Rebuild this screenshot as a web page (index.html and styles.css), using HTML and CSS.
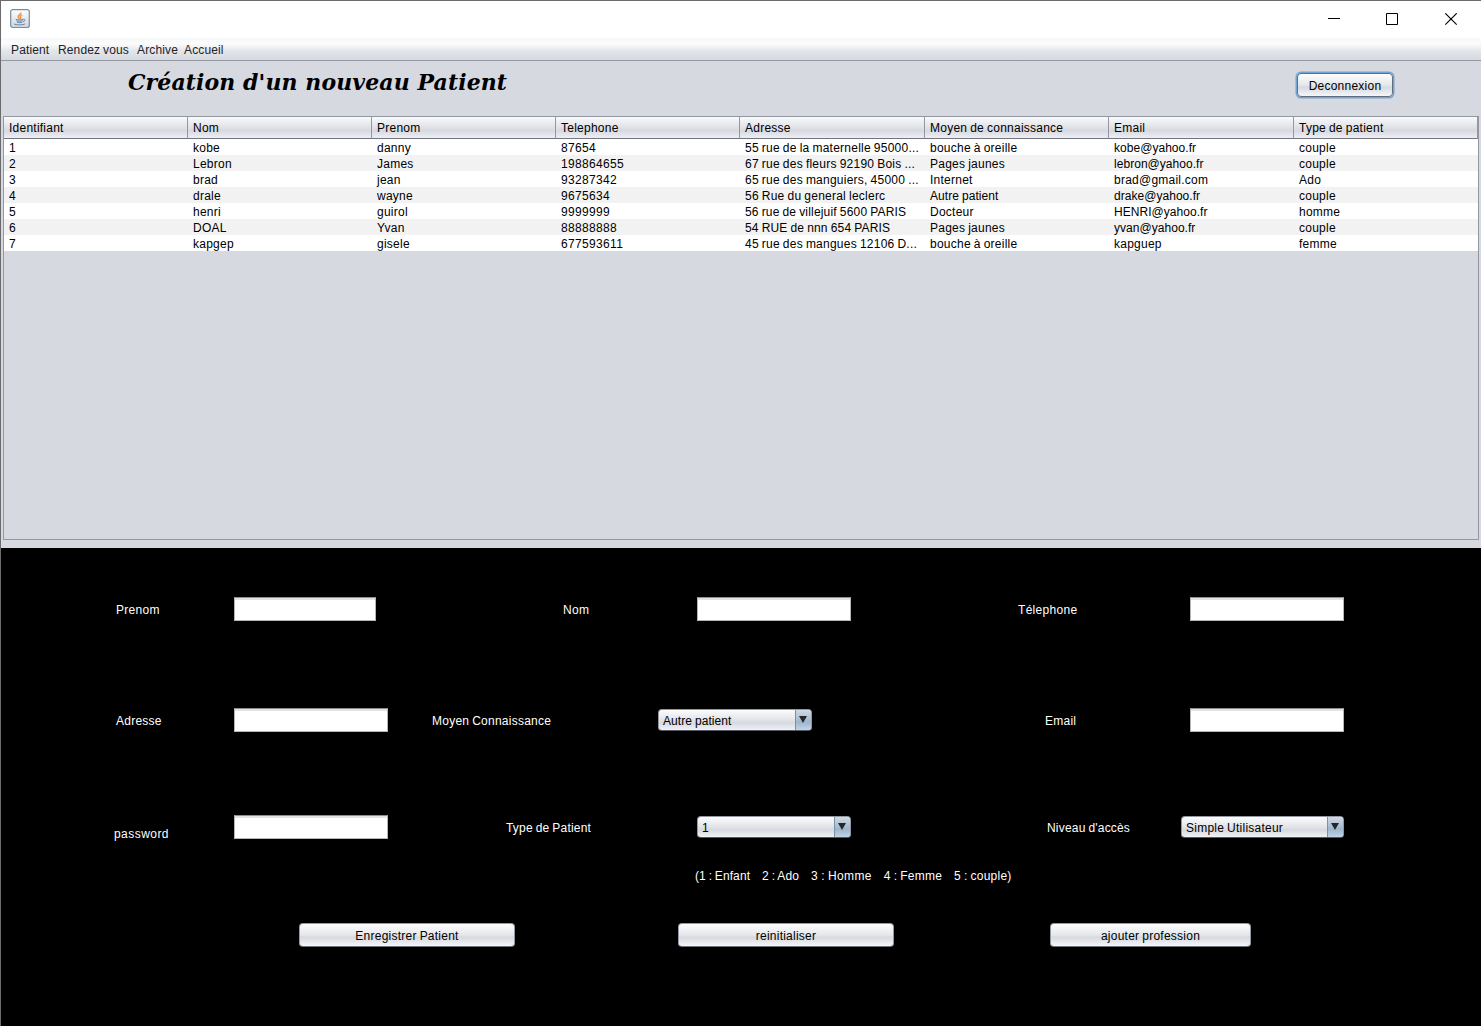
FILE: index.html
```html
<!DOCTYPE html>
<html lang="fr">
<head>
<meta charset="utf-8">
<title>Création d'un nouveau Patient</title>
<link rel="stylesheet" href="styles.css">
</head>
<body>
<div class="window">
  <header class="titlebar">
    <svg class="app-icon" width="20" height="20" viewBox="0 0 20 20">
      <defs><linearGradient id="tile" x2="0" y2="1"><stop offset="0" stop-color="#fff"/><stop offset="1" stop-color="#cdd6de"/></linearGradient></defs>
      <rect x=".7" y=".7" width="18.6" height="17.8" rx="2" fill="url(#tile)" stroke="#7b8c9b" stroke-width="1.2"/>
      <path d="M10.8 3.4c.7 1.8-3 2.6-2.5 4.6.2.8.9 1.2 1 2M12 6.2c-1.6.8-2.2 1.4-1.4 2.4.4.5.2 1-.3 1.4" fill="none" stroke="#ee9148" stroke-width="1.4"/>
      <path d="M5.700 10.300c1 .8 6.300.8 7.500 0M6.300 11.700c1 .7 5 .7 6.500 0M7 13.200c1 .6 4.200.6 5.300 0M13.300 10.200c2.300-.5 2.300 2-.3 2.500M4 14.800c1.500 1.400 9.500 1.400 11 0" fill="none" stroke="#6486a0" stroke-width="1"/>
    </svg>
    <svg class="controls" width="130" height="14" viewBox="0 0 130 14" fill="none" stroke="#000">
      <path d="M0 5.500H12"/>
      <path d="M58.500.500H69.500V11.500H58.500Z"/>
      <path d="M117.300.300L128.700 11.700M128.700.300L117.300 11.700" stroke-width="1.100"/>
    </svg>
  </header>
  <nav class="menubar">
    <span>Patient</span><span>Rendez vous</span><span>Archive</span><span>Accueil</span>
  </nav>
  <section class="list-panel">
    <div class="heading">
      <h1>Création d'un nouveau Patient</h1>
      <button class="button focused">Deconnexion</button>
    </div>
    <div class="table-frame">
      <table>
        <colgroup><col class="c184"><col class="c184"><col class="c184"><col class="c184"><col class="c185"><col class="c184"><col class="c185"><col class="c184"></colgroup>
        <thead><tr><th>Identifiant</th><th>Nom</th><th>Prenom</th><th>Telephone</th><th>Adresse</th><th>Moyen de connaissance</th><th>Email</th><th>Type de patient</th></tr></thead>
        <tbody>
          <tr><td>1</td><td>kobe</td><td>danny</td><td class="num">87654</td><td>55 rue de la maternelle 95000...</td><td>bouche à oreille</td><td class="mail">kobe@yahoo.fr</td><td>couple</td></tr>
          <tr><td>2</td><td>Lebron</td><td>James</td><td class="num">198864655</td><td>67 rue des fleurs 92190 Bois ...</td><td>Pages jaunes</td><td class="mail">lebron@yahoo.fr</td><td>couple</td></tr>
          <tr><td>3</td><td>brad</td><td>jean</td><td class="num">93287342</td><td>65 rue des manguiers, 45000 ...</td><td>Internet</td><td>brad@gmail.com</td><td>Ado</td></tr>
          <tr><td>4</td><td>drale</td><td>wayne</td><td class="num">9675634</td><td>56 Rue du general leclerc</td><td class="tight">Autre patient</td><td class="mail">drake@yahoo.fr</td><td>couple</td></tr>
          <tr><td>5</td><td>henri</td><td>guirol</td><td class="num">9999999</td><td class="snug">56 rue de villejuif 5600 PARIS</td><td>Docteur</td><td class="mail">HENRI@yahoo.fr</td><td>homme</td></tr>
          <tr><td>6</td><td>DOAL</td><td>Yvan</td><td class="num">88888888</td><td class="snug">54 RUE de nnn 654 PARIS</td><td>Pages jaunes</td><td class="mail">yvan@yahoo.fr</td><td>couple</td></tr>
          <tr><td>7</td><td>kapgep</td><td>gisele</td><td class="num">677593611</td><td>45 rue des mangues 12106 D...</td><td>bouche à oreille</td><td>kapguep</td><td>femme</td></tr>
        </tbody>
      </table>
    </div>
  </section>
  <form class="form">
    <div class="row identity">
      <label>Prenom</label><input class="short" aria-label="Prenom">
      <label>Nom</label><input aria-label="Nom">
      <label>Télephone</label><input aria-label="Télephone">
    </div>
    <div class="row contact">
      <label>Adresse</label><input aria-label="Adresse">
      <label>Moyen Connaissance</label><div class="combo"><span class="tight">Autre patient</span><i></i></div>
      <label>Email</label><input aria-label="Email">
    </div>
    <div class="row access">
      <label class="low">password</label><input aria-label="password">
      <label class="snug">Type de Patient</label><div class="combo"><span>1</span><i></i></div>
      <label class="snug">Niveau d'accès</label><div class="combo wide"><span>Simple Utilisateur</span><i></i></div>
    </div>
    <p class="hint"><span>(1 : Enfant</span><span>2 : Ado</span><span>3 : Homme</span><span>4 : Femme</span><span>5 : couple)</span></p>
    <div class="actions">
      <button type="button" class="button">Enregistrer Patient</button>
      <button type="button" class="button">reinitialiser</button>
      <button type="button" class="button">ajouter profession</button>
    </div>
  </form>
</div>
</body>
</html>
```

FILE: styles.css
```css
* { box-sizing: border-box; }
body { margin: 0; overflow: hidden; }
.window {
  height: 1026px;
  border-left: 1px solid #6b6a6c;
  border-top: 1px solid #6b6a6c;
  background: #d6d9e0;
  color: #000;
  font: 12px/16px "Liberation Sans", Arial, sans-serif;
  letter-spacing: .24px;
  word-spacing: -.6px;
  display: flex;
  flex-direction: column;
  white-space: nowrap;
}
.titlebar {
  height: 37px;
  background: #fff;
  display: flex;
  justify-content: space-between;
  padding: 8px 23px 0 9px;
}
.controls { margin-top: 4px; }
.menubar {
  height: 23px;
  border-bottom: 1px solid #9297a1;
  background: linear-gradient(#f7f8fa 0, #fbfbfc 6px, #e2e5ea 13px, #d6d9df);
  display: grid;
  grid-template-columns: 47px 79px 47px 60px;
  padding: 4px 0 0 10px;
  color: #232329;
  letter-spacing: .14px;
}
.list-panel { height: 487px; padding: 0 2px 8px; }
.heading { height: 55px; display: flex; justify-content: space-between; padding: 11px 86px 0 125px; }
h1 {
  margin: -3px 0 0;
  font: italic bold 22px/26px "DejaVu Serif", serif;
  letter-spacing: .1px;
  word-spacing: 0;
}
.button {
  height: 24px;
  padding: 2px 0 0;
  border: 1px solid #9599a3;
  border-bottom-color: #6e727b;
  border-radius: 4px;
  background: linear-gradient(#fdfdfe, #e5e7eb 50%, #d6d9df 60%, #f4f6fa);
  color: #000;
  font: inherit;
  letter-spacing: inherit;
  word-spacing: inherit;
}
.focused { width: 96px; border-color: #5f6f80; box-shadow: 0 0 0 1.500px #73a4d1; margin-top: 1px; }
.table-frame { height: 424px; border: 1px solid #9297a1; }
table { width: 1474px; table-layout: fixed; border-collapse: separate; border-spacing: 0; }
.c184 { width: 184px; }
.c185 { width: 185px; }
th {
  height: 22px;
  padding: 1px 0 0 5px;
  text-align: left;
  font-weight: normal;
  border-bottom: 1px solid #72757e;
  border-right: 1px solid #9297a1;
  background: linear-gradient(#f9fafb, #e2e4e9 45%, #d6d9df 65%, #edeff4);
}
td { height: 16px; padding: 2px 0 0 5px; line-height: 14px; }
tbody tr { background: #fff; }
tbody tr:nth-child(even) { background: #f2f2f2; }
.num { letter-spacing: .33px; }
.mail { letter-spacing: .04px; }
.tight { letter-spacing: .08px; }
.snug { letter-spacing: .19px; }
.form { flex: 1; background: #000; color: #fff; padding-top: 49px; }
.row { display: grid; grid-template-rows: 24px; align-items: center; height: 24px; }
.row label { padding-top: 2px; }
.identity { grid-template-columns: 118px 329px 134px 321px 172px 154px; padding-left: 115px; margin-bottom: 87px; letter-spacing: .3px; }
.contact { grid-template-columns: 118px 198px 226px 387px 145px 154px; padding-left: 115px; margin-bottom: 83px; }
.access { grid-template-columns: 120px 272px 191px 350px 134px 163px; padding-left: 113px; }
.row .low { padding-top: 14px; letter-spacing: .45px; }
input {
  width: 154px;
  height: 24px;
  border: 1px solid #b5b5b5;
  border-top-color: #8d8d8d;
  background: #fff;
  box-shadow: inset 0 2px #e3e3e3;
  padding: 0 4px;
}
.short { width: 142px; }
.combo {
  width: 154px;
  height: 22px;
  display: flex;
  border: 1px solid #9297a1;
  border-bottom-color: #555963;
  border-radius: 4px;
  background: linear-gradient(#fbfcfd, #e4e6ea 45%, #d6d9df 65%, #f0f2f6);
  color: #000;
  overflow: hidden;
}
.combo span { flex: 1; padding: 3px 0 0 4px; }
.combo i {
  width: 16px;
  border-left: 1px solid #7992a9;
  background: linear-gradient(#cfdae4, #a9bdcf 50%, #9eb5ca 60%, #bfd5e9);
  padding: 6px 0 0 3px;
}
.combo i::after {
  content: "";
  display: block;
  width: 8px;
  height: 7px;
  background: #22272c;
  clip-path: polygon(0 0, 100% 0, 50% 100%);
}
.wide { width: 163px; }
.hint { margin: 29px 0 0 694px; display: flex; gap: 12px; }
.hint span:first-child { letter-spacing: .08px; }
.hint span:nth-child(2) { letter-spacing: .12px; }
.hint span:nth-child(3) { letter-spacing: .36px; }
.actions { display: grid; grid-template-columns: 216px 216px 201px; column-gap: 163px; padding-left: 298px; margin-top: 39px; }
.actions .button:last-child { margin-left: -7px; margin-right: 7px; }
```
